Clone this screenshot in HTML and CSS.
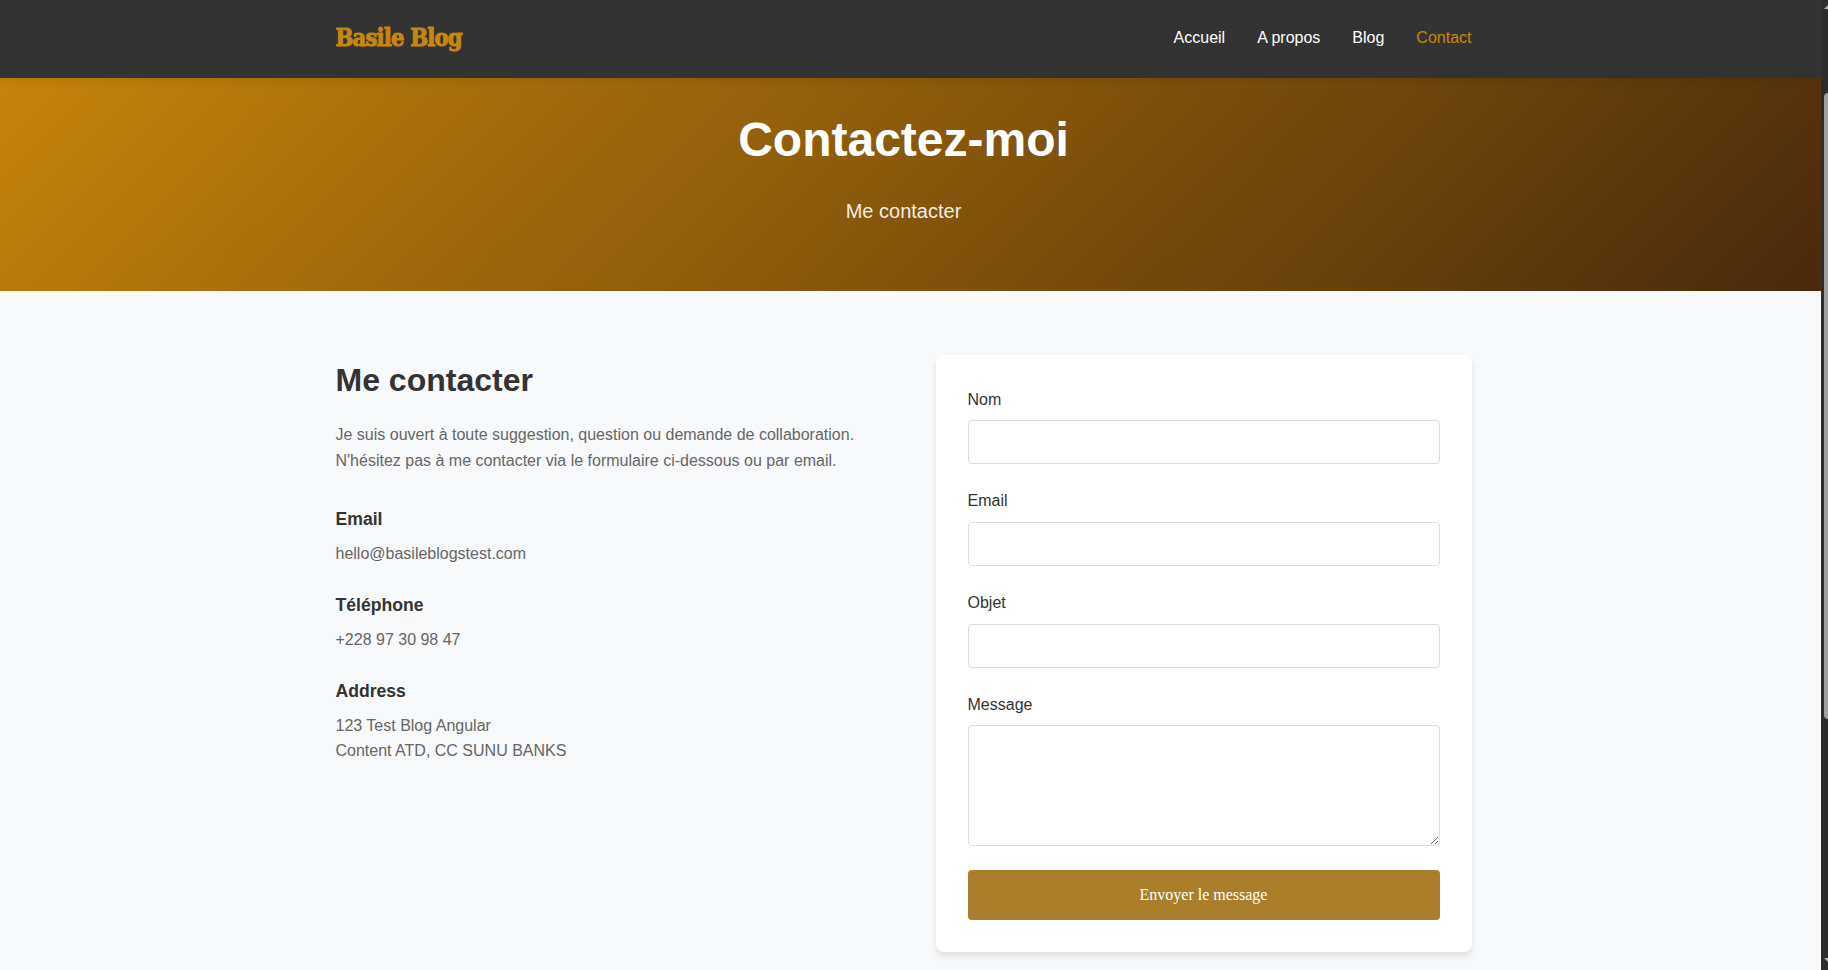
FILE: index.html
```html
<!DOCTYPE html>
<html lang="fr">
<head>
<meta charset="utf-8">
<title>Basile Blog - Contact</title>
<link rel="stylesheet" href="styles.css">
</head>
<body>
<div class="page">
  <header class="header">
    <div class="container header-inner">
      <a class="logo">Basile Blog</a>
      <nav class="nav">
        <a>Accueil</a><a>A propos</a><a>Blog</a><a class="active">Contact</a>
      </nav>
    </div>
  </header>
  <section class="hero">
    <h1>Contactez-moi</h1>
    <p>Me contacter</p>
  </section>
  <main class="container content">
    <section class="info">
      <h2>Me contacter</h2>
      <p class="intro">Je suis ouvert à toute suggestion, question ou demande de collaboration. N'hésitez pas à me contacter via le formulaire ci-dessous ou par email.</p>
      <div class="item"><h3>Email</h3><p>hello@basileblogstest.com</p></div>
      <div class="item"><h3>Téléphone</h3><p>+228 97 30 98 47</p></div>
      <div class="item"><h3>Address</h3><p>123 Test Blog Angular<br>Content ATD, CC SUNU BANKS</p></div>
    </section>
    <form class="form">
      <div class="group"><label for="nom">Nom</label><input id="nom" type="text"></div>
      <div class="group"><label for="email">Email</label><input id="email" type="email"></div>
      <div class="group"><label for="objet">Objet</label><input id="objet" type="text"></div>
      <div class="group"><label for="message">Message</label><textarea id="message"></textarea></div>
      <button class="submit" type="button">Envoyer le message</button>
    </form>
  </main>
</div>
<div class="scrollbar">
  <div class="thumb"></div>
  <svg class="arrow up" width="4" height="4" viewBox="0 0 4 4"><path d="M0 4L4 0V4Z"/></svg>
  <svg class="arrow down" width="4" height="4" viewBox="0 0 4 4"><path d="M0 0H4V4Z"/></svg>
</div>
</body>
</html>
```
FILE: styles.css
```css
* { box-sizing: border-box; margin: 0; padding: 0; }
html, body { height: 970px; overflow: hidden; }
body {
  font-family: "Liberation Sans", Arial, sans-serif;
  font-size: 16px;
  line-height: 1.6;
  color: #333;
  background: #f8f9fb;
}
.page { width: 1834px; margin-left: -13.5px; }
.container { width: 1200px; margin: 0 auto; padding: 0 32px; }
.header {
  position: relative;
  z-index: 2;
  height: 78px;
  background: #333;
  box-shadow: 0 2px 10px rgba(0, 0, 0, .1);
}
.header-inner { display: flex; justify-content: space-between; align-items: center; height: 76px; }
.logo {
  padding-top: 1px;
  font-family: "DejaVu Serif Condensed", "DejaVu Serif", serif;
  font-stretch: condensed;
  font-size: 23.5px;
  font-weight: 700;
  letter-spacing: -.8px;
  -webkit-text-stroke: 1px #c7860c;
  color: #c7860c;
}
.nav { display: flex; gap: 32px; color: #fff; }
.nav .active { color: #c7860c; }
.hero {
  margin-top: -40px;
  padding: 64px 0;
  text-align: center;
  color: #fff;
  background: linear-gradient(135deg, #c8860a 0%, #4a2a0c 100%);
}
.hero h1 { font-size: 48px; margin-bottom: 16px; }
.hero p { font-size: 20px; opacity: .9; }
.content { display: grid; grid-template-columns: 1fr 1fr; gap: 64px; padding-top: 64px; }
.info h2 { font-size: 32px; margin-bottom: 16px; }
.info p { color: #666; }
.info .intro { margin-bottom: 32px; }
.item { margin-bottom: 24px; }
.item h3 { font-size: 17.6px; margin-bottom: 8px; }
.form {
  padding: 32px;
  background: #fff;
  border-radius: 8px;
  box-shadow: 0 4px 6px rgba(0, 0, 0, .1);
}
.group { margin-bottom: 24px; }
.group label { display: block; margin-bottom: 8px; }
.group input, .group textarea {
  display: block;
  width: 100%;
  border: 1px solid #ddd;
  border-radius: 4px;
  background: #fff;
}
.group input { height: 44px; }
.group textarea { height: 121px; resize: vertical; }
.submit {
  display: block;
  width: 100%;
  height: 50px;
  border: 0;
  border-radius: 4px;
  background: #aa7e2a;
  color: #fff;
  font: 16px "Liberation Serif", "Times New Roman", serif;
}
.scrollbar { position: absolute; top: 0; right: 0; z-index: 3; width: 7px; height: 970px; background: #2c2c2c; overflow: hidden; }
.thumb { position: absolute; left: 3px; top: 93px; width: 9px; height: 626px; border-radius: 4px; background: #9f9f9f; }
.arrow { position: absolute; left: 3px; fill: #b5b5b5; }
.up { top: 5px; }
.down { top: 958px; }
```
